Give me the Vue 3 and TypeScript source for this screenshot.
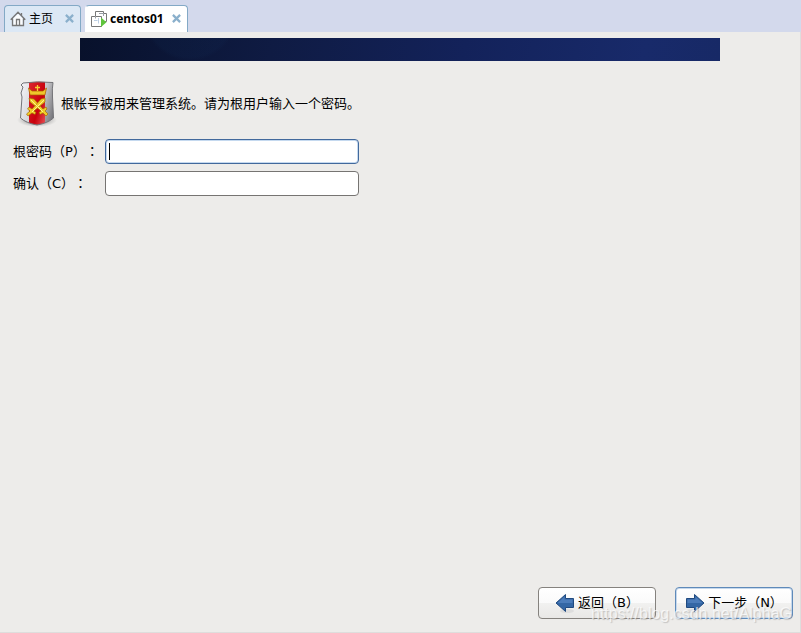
<script setup lang="ts">
import { ref } from 'vue'

const password = ref<string>('')
const confirmation = ref<string>('')
</script>

<template>
  <div class="window">
    <nav class="tabs" aria-label="标签">
      <div class="tab home">
        <a href="#" class="tab-link">
          <svg class="tab-icon" viewBox="0 0 16 16" aria-hidden="true">
            <path d="M3.5 7.5V14.5H12.5V7.5L8 3Z" fill="#fbfcfd" />
            <path d="M.7 8.7 8 1.3 15.3 8.7M2.5 7.5V14.5H13.5V7.5M6.5 14V8.5H9.5V14M11.5 2V4.5" fill="none" stroke="#777" stroke-width="1.3" />
          </svg>
          <span>主页</span>
        </a>
        <button class="close" type="button" aria-label="关闭主页">
          <svg viewBox="0 0 8 8"><path d="M.8.8 7.2 7.2M7.2.8.8 7.2" stroke="#8bb0cc" stroke-width="2" /></svg>
        </button>
      </div>
      <div class="tab active">
        <a href="#" class="tab-link">
          <svg class="tab-icon" viewBox="0 0 16 16" aria-hidden="true">
            <path d="M4.5.5H12.5V2.5H15.5V10.5H4.5Z" fill="#fff" stroke="#777" />
            <path d="M.5 5.5H10.5V15.5H.5Z" fill="#fff" stroke="#777" />
            <path d="M4.5 5V7.500M8 2.500H12.500V5" fill="none" stroke="#9aa0a8" />
            <path d="M3 9.5H6.5M7.5 7V12.5" fill="none" stroke="#bccfe4" />
            <path d="M10 6.5V16L15.500 11.300Z" fill="#5fc43c" />
          </svg>
          <span>centos01</span>
        </a>
        <button class="close" type="button" aria-label="关闭 centos01">
          <svg viewBox="0 0 8 8"><path d="M.8.8 7.2 7.2M7.2.8.8 7.2" stroke="#8bb0cc" stroke-width="2" /></svg>
        </button>
      </div>
    </nav>

    <main class="screen">
      <div class="banner"></div>

      <form class="form" @submit.prevent>
        <div class="intro">
          <svg class="shield" viewBox="0 0 44 48" aria-hidden="true">
            <defs>
              <linearGradient id="silver" x1="0" x2="1" y2=".3">
                <stop offset="0" stop-color="#c4c4c7" />
                <stop offset=".2" stop-color="#efeff2" />
                <stop offset=".7" stop-color="#c5c5c8" />
                <stop offset="1" stop-color="#77777c" />
              </linearGradient>
              <linearGradient id="red" x1="0" y1="0" x2="1" y2="1">
                <stop offset="0" stop-color="#dd2930" />
                <stop offset=".6" stop-color="#c9000c" />
                <stop offset="1" stop-color="#e9575b" />
              </linearGradient>
              <radialGradient id="shade">
                <stop offset=".4" stop-color="#888" stop-opacity=".8" />
                <stop offset="1" stop-color="#aaa" stop-opacity="0" />
              </radialGradient>
              <clipPath id="shape">
                <path d="M8 3Q22 1 38 2.5Q37 8 37.5 17L38.500 38Q33 43 22 45Q11 43 5.500 38L7 17 6 13 8 7 6 5Z" />
              </clipPath>
            </defs>
            <ellipse cx="22" cy="40" rx="20" ry="7" fill="url(#shade)" />
            <g clip-path="url(#shape)">
              <path d="M0 0H44V48H0Z" fill="url(#silver)" />
              <path d="M14 0H30V48H14Z" fill="url(#red)" />
            </g>
            <path d="M8 3Q22 1 38 2.5Q37 8 37.5 17L38.500 38Q33 43 22 45Q11 43 5.500 38L7 17 6 13 8 7 6 5Z" fill="none" stroke="#747478" />
            <path d="M13.5 8 17 11H28L31.500 8 30 15H15Z" fill="#efc62b" stroke="#a95800" stroke-width=".7" />
            <path d="M22.5 5V11M20 7.5H25" stroke="#f5cd31" stroke-width="1.3" />
            <g fill="#f0cb28" stroke="#9d5c00" stroke-width=".6">
              <path d="M14 18 19 19 28 29 31 27 32 29 30 31 33 34 31 36 28 33 25 34.500 24 32.500 26 31 15 22Z" />
              <path d="M30 18 26 19 17 29 14 27 12.500 29 15 31 11.500 34 13 36 17 33 20 34.500 21 32.500 19 31 30 22Z" />
            </g>
            <path d="M16 20 28 32M29 20 17 32" stroke="#fff18b" />
          </svg>
          <p>根帐号被用来管理系统。请为根用户输入一个密码。</p>
        </div>

        <div class="fields">
          <label for="password">根密码（P）<span class="colon">：</span></label>
          <div class="field focused">
            <input id="password" v-model="password" type="password" />
            <span class="caret"></span>
          </div>
          <label for="confirmation">确认（C）<span class="colon">：</span></label>
          <div class="field">
            <input id="confirmation" v-model="confirmation" type="password" />
          </div>
        </div>

        <footer class="actions">
          <button class="action" type="button">
            <svg class="arrow" viewBox="0 0 20 20" aria-hidden="true">
              <ellipse cx="12" cy="18" rx="7" ry="2" fill="#ddd" />
              <path d="M1 10 10.5 1.5V5.5H18.5V14.5H10.5V18.5Z" fill="#3467a5" stroke="#204a80" />
              <path d="M2.7 10 9.5 3.8V6.5H17.5V10Z" fill="#4c7dbb" />
            </svg>
            <span>返回（B）</span>
          </button>
          <button class="action primary" type="submit">
            <svg class="arrow" viewBox="0 0 20 20" aria-hidden="true">
              <ellipse cx="8" cy="18" rx="7" ry="2" fill="#ddd" />
              <path d="M19 10 9.5 1.5V5.5H1.5V14.5H9.5V18.5Z" fill="#3467a5" stroke="#204a80" />
              <path d="M17.3 10 10.5 3.8V6.5H2.5V10Z" fill="#4c7dbb" />
            </svg>
            <span>下一步（N）</span>
          </button>
          <span class="watermark">https://blog.csdn.net/AlphaG</span>
        </footer>
      </form>
    </main>
  </div>
</template>

<style>
body {
  margin: 0;
}
</style>

<style scoped>
.window {
  box-sizing: border-box;
  display: flex;
  flex-direction: column;
  min-height: 100vh;
  background: #edecea;
  color: #000;
  font: 13px/20px "DejaVu Sans", "Noto Sans CJK SC", sans-serif;
  text-spacing-trim: space-all;
}

.tabs {
  display: flex;
  gap: 4px;
  padding: 5px 4px 0;
  background: #d3d9ec;
}

.tab {
  box-sizing: border-box;
  display: flex;
  align-items: center;
  justify-content: space-between;
  gap: 8px;
  height: 27px;
  padding: 0 6px 0 5px;
  border: 1px solid #83a9c6;
  border-bottom: 0;
  border-radius: 4px 4px 0 0;
  background: #dce8f5;
  font-size: 12px;
}

.tab.home {
  gap: 12px;
}

.tab.active {
  border-left-color: #fff;
  background: #fff;
  font-family: "Noto Sans", "DejaVu Sans", sans-serif;
  font-weight: 700;
}

.tab-link {
  display: flex;
  align-items: center;
  gap: 3px;
  color: inherit;
  text-decoration: none;
}

.tab-icon {
  width: 16px;
  height: 16px;
}

.close {
  display: flex;
  padding: 0 0 2px;
  border: 0;
  background: none;
}

.close svg {
  width: 9px;
  height: 9px;
}

.screen {
  display: flex;
  flex: 1;
  flex-direction: column;
  padding-top: 6px;
  border-right: 1px solid #dedddc;
  border-bottom: 1px solid #dedddc;
}

.banner {
  align-self: center;
  width: 80%;
  height: 23px;
  background:
    radial-gradient(circle at 110px -25px, #163c6b18 0 44px, transparent 48px),
    linear-gradient(100deg, #08112b, #0f1b43 30%, #13225a 60%, #182a6a 88%, #172966);
}

.form {
  display: flex;
  flex: 1;
  flex-direction: column;
}

.intro {
  display: flex;
  align-items: center;
  gap: 2px;
  padding: 19px 15px 0;
}

.intro p {
  margin: 0;
}

.shield {
  width: 44px;
  height: 48px;
}

.fields {
  display: grid;
  grid-template-columns: 92px minmax(0, 254px);
  row-gap: 7px;
  align-items: center;
  padding: 11px 13px;
}

.fields label {
  white-space: nowrap;
}

.colon {
  font-family: "Noto Sans CJK TC", sans-serif;
}

.field {
  position: relative;
  display: flex;
}

.field input {
  box-sizing: border-box;
  width: 100%;
  height: 25px;
  padding: 2px 5px;
  border: 1px solid #767472;
  border-radius: 4px;
  outline: 0;
  background: #fff;
  font: inherit;
}

.field.focused input {
  border-color: #42699c;
  box-shadow: inset 0 0 0 1px #c5d9ef;
}

.caret {
  position: absolute;
  top: 4px;
  bottom: 4px;
  left: 4px;
  width: 1px;
  background: #000;
}

.actions {
  position: relative;
  display: flex;
  justify-content: flex-end;
  gap: 19px;
  margin-top: auto;
  padding: 0 7px 13px;
}

.action {
  box-sizing: border-box;
  display: flex;
  align-items: center;
  justify-content: center;
  gap: 3px;
  width: 118px;
  height: 32px;
  padding: 0;
  border: 1px solid #85827e;
  border-radius: 4px;
  background: linear-gradient(#fff, #fafafa 50%, #f1f1f0 51%, #e9e8e6);
  color: #000;
  font: inherit;
  white-space: nowrap;
}

.action.primary {
  border-color: #5f8ab9;
  box-shadow: inset 0 0 0 1px #c6d8ec;
}

.arrow {
  width: 20px;
  height: 20px;
}

.watermark {
  position: absolute;
  right: 8px;
  bottom: 8px;
  color: #ffffffb0;
  font: 16px/20px "Liberation Sans", sans-serif;
  text-shadow: 1px 1px 1px #8886;
  pointer-events: none;
}
</style>
